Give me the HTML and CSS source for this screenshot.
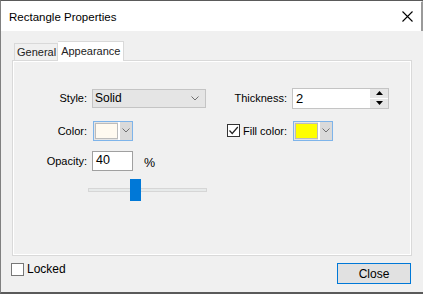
FILE: index.html
```html
<!DOCTYPE html>
<html lang="en">
<head>
    <meta charset="UTF-8">
    <title>Rectangle Properties</title>
    <link rel="stylesheet" href="styles.css">
</head>
<body>
    <div class="dialog">
        <!-- title bar -->
        <div class="titlebar">
            <span class="title">Rectangle Properties</span>
            <svg class="close-x" width="11" height="11" viewBox="0 0 11 11">
                <path d="M0.5 0.5 L10.5 10.5 M10.5 0.5 L0.5 10.5" stroke="#000" stroke-width="1.1" fill="none"/>
            </svg>
        </div>

        <div class="content">
            <div class="tabs">
                <div class="tab">General</div>
                <div class="tab active">Appearance</div>
            </div>

            <div class="panel">
                <div class="grid">
                    <label class="lbl">Style:</label>
                    <div class="combo">
                        <span>Solid</span>
                        <svg width="8" height="5" viewBox="0 0 8 5"><path d="M0.5 0.5 L4 4 L7.5 0.5" stroke="#707070" fill="none"/></svg>
                    </div>
                    <label class="lbl">Thickness:</label>
                    <div class="spin">
                        <span class="spin-text">2</span>
                        <div class="spin-btns">
                            <div class="spin-btn"><svg width="7" height="4" viewBox="0 0 7 4"><path d="M0 4 L3.5 0 L7 4 Z" fill="#000"/></svg></div>
                            <div class="spin-btn"><svg width="7" height="4" viewBox="0 0 7 4"><path d="M0 0 L3.5 4 L7 0 Z" fill="#000"/></svg></div>
                        </div>
                    </div>

                    <label class="lbl">Color:</label>
                    <div class="colorbtn">
                        <span class="swatch cream"></span>
                        <span class="drop"><svg width="8" height="5" viewBox="0 0 8 5"><path d="M0.5 0.5 L4 4 L7.5 0.5" stroke="#707070" fill="none"/></svg></span>
                    </div>
                    <div class="lbl fill">
                        <span class="check on">
                            <svg width="11" height="11" viewBox="0 0 11 11"><path d="M1.5 5.5 L4.2 8.5 L9.8 2" stroke="#222" stroke-width="1.2" fill="none"/></svg>
                        </span>
                        <span>Fill color:</span>
                    </div>
                    <div class="colorbtn">
                        <span class="swatch yellow"></span>
                        <span class="drop"><svg width="8" height="5" viewBox="0 0 8 5"><path d="M0.5 0.5 L4 4 L7.5 0.5" stroke="#707070" fill="none"/></svg></span>
                    </div>

                    <label class="lbl">Opacity:</label>
                    <div class="opacity">
                        <div class="textbox">40</div>
                        <span class="pct">%</span>
                    </div>
                    <div></div>
                    <div></div>

                    <div></div>
                    <div class="slider">
                        <div class="track"></div>
                        <div class="thumb" style="left: 42px;"></div>
                    </div>
                </div>
            </div>

            <div class="footer">
                <div class="locked">
                    <span class="check"></span>
                    <span>Locked</span>
                </div>
                <button class="button">Close</button>
            </div>
        </div>
    </div>
</body>
</html>
```

FILE: styles.css
```css
body {
    margin: 0;
    background: #f0f0f0;
    font-family: 'Liberation Sans', Arial, sans-serif;
    font-size: 11px;
    color: #000;
}

.dialog {
    width: 423px;
    height: 294px;
    box-sizing: border-box;
    border-top: 1px solid #5a5a5a;
    border-left: 1px solid #808080;
    border-bottom: 2px solid #5a5a5a;
    background: #f0f0f0;
    display: flex;
    flex-direction: column;
}

/* title bar */
.titlebar {
    height: 29px;
    background: #fff;
    border-top: 1px solid #fff;
    border-right: 2px solid #9a9a9a;
    display: flex;
    align-items: center;
    justify-content: space-between;
    padding: 0 8px 0 8px;
}

.title {
    font-size: 11.5px;
    padding-top: 1px;
}

.content {
    flex: 1;
    display: flex;
    flex-direction: column;
    padding: 10px 11px 0 11px;
}

/* tabs */
.tabs {
    display: flex;
    align-items: flex-end;
    padding-left: 2px;
    height: 19px;
}

.tab {
    height: 16px;
    line-height: 17px;
    padding: 0 1px 0 2px;
    border: 1px solid #d9d9d9;
    border-bottom: none;
    background: #f0f0f0;
    color: #222;
}

.tab.active {
    height: 19px;
    line-height: 18px;
    padding: 0 3px;
    background: #fff;
    border-left: none;
    position: relative;
    z-index: 1;
    margin-bottom: -1px;
}

/* tab page */
.panel {
    height: 194px;
    border: 1px solid #d9d9d9;
    box-shadow: inset 0 0 0 1px #fff;
    background: #f0f0f0;
}

.grid {
    display: grid;
    grid-template-columns: 79px 137px 63px 1fr;
    grid-template-rows: 32px 33px 28px 30px;
    align-items: center;
    padding-top: 21px;
}

.lbl {
    text-align: right;
    padding-right: 5px;
    white-space: nowrap;
}

.lbl.fill {
    display: flex;
    justify-content: flex-end;
    align-items: center;
    gap: 3px;
}

.combo {
    width: 114px;
    height: 19px;
    box-sizing: border-box;
    border: 1px solid #c4c4c4;
    background: #e5e5e5;
    display: flex;
    align-items: center;
    justify-content: space-between;
    padding: 0 6px 0 2px;
    font-size: 12px;
}

.spin {
    width: 97px;
    height: 21px;
    box-sizing: border-box;
    border: 1px solid #c4c4c4;
    background: #fff;
    display: flex;
}

.spin-text {
    flex: 1;
    padding: 2px 3px;
    font-size: 13px;
}

.spin-btns {
    width: 18px;
    display: flex;
    flex-direction: column;
    gap: 1px;
    background: #fff;
}

.spin-btn {
    flex: 1;
    background: #e6e6e6;
    display: flex;
    align-items: center;
    justify-content: center;
}

.colorbtn {
    width: 40px;
    height: 20px;
    box-sizing: border-box;
    border: 1px solid #7eb4ea;
    background: #e5e5e5;
    display: flex;
    margin-left: 1px;
}

.swatch {
    width: 23px;
    margin: 1px 0 1px 1px;
    border: 1px solid #bcbcbc;
    box-sizing: border-box;
}

.swatch.cream { background: #fffaf0; }
.swatch.yellow { background: #ffff00; }

.drop {
    flex: 1;
    border-left: 2px solid #fff;
    background: #dadada;
    display: flex;
    align-items: center;
    justify-content: center;
}

.opacity {
    display: flex;
    align-items: center;
}

.textbox {
    width: 41px;
    height: 20px;
    box-sizing: border-box;
    border: 1px solid #a0a0a0;
    background: #fff;
    padding: 1px 3px;
    font-size: 12.5px;
}

.pct {
    margin-left: 11px;
    padding-top: 3px;
    font-size: 12.5px;
}

.slider {
    position: relative;
    width: 119px;
    height: 22px;
    margin-left: -4px;
    display: flex;
    align-items: center;
}

.track {
    width: 100%;
    height: 4px;
    box-sizing: border-box;
    border: 1px solid #d6d6d6;
    background: #e7eaea;
}

.thumb {
    position: absolute;
    top: 0;
    width: 11px;
    height: 22px;
    background: #0078d7;
}

/* checkboxes */
.check {
    width: 13px;
    height: 13px;
    box-sizing: border-box;
    border: 1px solid #333;
    background: #fff;
    display: inline-flex;
    align-items: center;
    justify-content: center;
}

.footer {
    display: flex;
    justify-content: space-between;
    align-items: flex-start;
    margin-top: 6px;
    padding-right: 1px;
}

.locked {
    display: flex;
    align-items: center;
    gap: 3px;
    margin-left: -1px;
    font-size: 12px;
}

.locked .check {
    border-color: #777;
}

.button {
    width: 74px;
    height: 21px;
    margin-top: 1px;
    border: 1px solid #0078d7;
    box-shadow: inset 0 0 0 1px #e1e1e1;
    background: #e1e1e1;
    font-family: 'Liberation Sans', Arial, sans-serif;
    font-size: 12px;
    color: #000;
    padding: 0;
}
```
